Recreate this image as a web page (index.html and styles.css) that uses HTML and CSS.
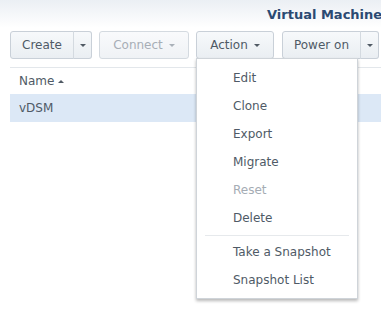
FILE: index.html
```html
<!DOCTYPE html>
<html>
<head>
<meta charset="utf-8">
<link rel="stylesheet" href="styles.css">
</head>
<body>
<div class="app">
  <div class="titlebar"><span class="title">Virtual Machine</span></div>
  <div class="toolbar">
    <div class="split">
      <div class="btn main w-create">Create</div>
      <div class="btn arrow"><span class="caret"></span></div>
    </div>
    <div class="btn disabled w-connect">Connect<span class="caret light"></span></div>
    <div class="menu-wrap">
      <div class="btn w-action">Action<span class="caret"></span></div>
      <div class="menu">
        <div class="item">Edit</div>
        <div class="item">Clone</div>
        <div class="item">Export</div>
        <div class="item">Migrate</div>
        <div class="item off">Reset</div>
        <div class="item">Delete</div>
        <div class="sep"></div>
        <div class="item">Take a Snapshot</div>
        <div class="item">Snapshot List</div>
      </div>
    </div>
    <div class="split">
      <div class="btn main w-power">Power on</div>
      <div class="btn arrow"><span class="caret"></span></div>
    </div>
  </div>
  <div class="grid">
    <div class="ghead">Name<span class="sort"></span></div>
    <div class="grow sel">vDSM</div>
  </div>
</div>
</body>
</html>
```

FILE: styles.css
```css
html, body {
  margin: 0;
  padding: 0;
  background: #fff;
}
body {
  font-family: "DejaVu Sans", Verdana, sans-serif;
  font-size: 12px;
  color: #4f5a66;
  width: 381px;
  height: 309px;
  overflow: hidden;
}
.titlebar {
  height: 28px;
  background: linear-gradient(#ebeff4, #ffffff);
  display: flex;
  align-items: center;
  padding-left: 267px;
  white-space: nowrap;
}
.title {
  font-weight: bold;
  font-size: 13px;
  color: #2b4a72;
}
.toolbar {
  display: flex;
  margin: 3px 0 0 10px;
  padding-bottom: 8px;
  border-bottom: 1px solid #e3e7eb;
  gap: 7px;
  white-space: nowrap;
}
.split {
  display: flex;
}
.btn {
  box-sizing: border-box;
  height: 28px;
  border: 1px solid #c9d0d8;
  border-radius: 3px;
  background: linear-gradient(#f7f9fb, #eaeef2);
  display: flex;
  align-items: center;
  justify-content: center;
  color: #4f5a66;
}
.split .main {
  border-top-right-radius: 0;
  border-bottom-right-radius: 0;
}
.split .arrow {
  width: 19px;
  border-left: 1px solid #d4dae0;
  border-top-left-radius: 0;
  border-bottom-left-radius: 0;
  margin-left: -1px;
}
.w-create { width: 64px; }
.w-connect { width: 90px; }
.w-action { width: 78px; }
.w-power { width: 79px; }
.disabled {
  color: #a7aeb6;
  background: linear-gradient(#f9fafc, #eff2f5);
  border-color: #d4dae0;
}
.caret {
  width: 0;
  height: 0;
  border-left: 3px solid transparent;
  border-right: 3px solid transparent;
  border-top: 3px solid #505a64;
  margin-left: 6px;
}
.arrow .caret { margin-left: 0; }
.caret.light { border-top-color: #aab1b9; }
.menu-wrap {
  position: relative;
  margin-right: 1px;
}
.menu {
  position: absolute;
  left: 0;
  top: 27px;
  width: 162px;
  box-sizing: border-box;
  padding: 5px 0 4px;
  background: #fff;
  border: 1px solid #cfd4d9;
  box-shadow: 0 2px 3px rgba(0, 0, 0, 0.28);
  z-index: 5;
}
.item {
  height: 28px;
  line-height: 28px;
  padding-left: 36px;
  color: #4f5a66;
}
.item.off { color: #a5acb4; }
.sep {
  height: 1px;
  margin: 3px 8px 2px;
  background: #e6e9ec;
}
.grid {
  margin-left: 10px;
}
.ghead {
  height: 26px;
  display: flex;
  align-items: center;
  padding-left: 9px;
}
.sort {
  width: 0;
  height: 0;
  border-left: 3px solid transparent;
  border-right: 3px solid transparent;
  border-bottom: 3px solid #505a64;
  margin-left: 4px;
}
.grow {
  height: 28px;
  display: flex;
  align-items: center;
  padding-left: 9px;
}
.sel {
  background: #dce8f6;
}
```
